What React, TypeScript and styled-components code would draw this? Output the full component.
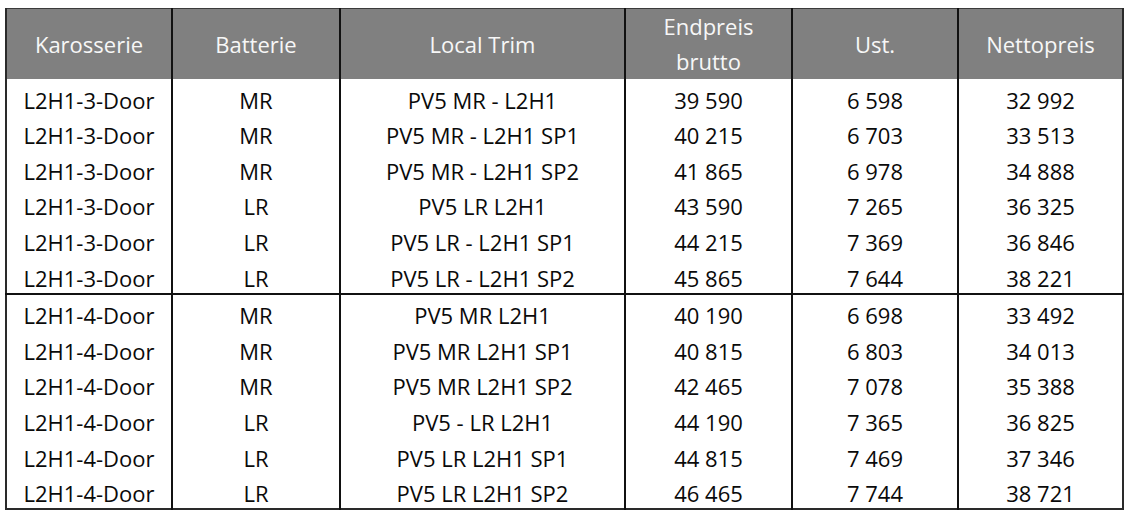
import React from "react";
import styled, { createGlobalStyle } from "styled-components";

const GlobalStyle = createGlobalStyle`
  html, body {
    margin: 0;
    padding: 0;
    background: #fff;
  }
  body {
    font-family: 'Open Sans', 'Liberation Sans', sans-serif;
  }
`;

type Row = [string, string, string, string, string, string];

const groups: Row[][] = [
  [
    ["L2H1-3-Door", "MR", "PV5 MR - L2H1", "39 590", "6 598", "32 992"],
    ["L2H1-3-Door", "MR", "PV5 MR - L2H1 SP1", "40 215", "6 703", "33 513"],
    ["L2H1-3-Door", "MR", "PV5 MR - L2H1 SP2", "41 865", "6 978", "34 888"],
    ["L2H1-3-Door", "LR", "PV5 LR L2H1", "43 590", "7 265", "36 325"],
    ["L2H1-3-Door", "LR", "PV5 LR - L2H1 SP1", "44 215", "7 369", "36 846"],
    ["L2H1-3-Door", "LR", "PV5 LR - L2H1 SP2", "45 865", "7 644", "38 221"],
  ],
  [
    ["L2H1-4-Door", "MR", "PV5 MR L2H1", "40 190", "6 698", "33 492"],
    ["L2H1-4-Door", "MR", "PV5 MR L2H1 SP1", "40 815", "6 803", "34 013"],
    ["L2H1-4-Door", "MR", "PV5 MR L2H1 SP2", "42 465", "7 078", "35 388"],
    ["L2H1-4-Door", "LR", "PV5 - LR L2H1", "44 190", "7 365", "36 825"],
    ["L2H1-4-Door", "LR", "PV5 LR L2H1 SP1", "44 815", "7 469", "37 346"],
    ["L2H1-4-Door", "LR", "PV5 LR L2H1 SP2", "46 465", "7 744", "38 721"],
  ],
];

const columns = [
  { title: "Karosserie", width: 166 },
  { title: "Batterie", width: 168 },
  { title: "Local Trim", width: 285 },
  { title: "Endpreis brutto", width: 167, twoLine: true },
  { title: "Ust.", width: 166 },
  { title: "Nettopreis", width: 165 },
];

export default function App() {
  return (
    <Page>
      <GlobalStyle />
      <PriceTable>
        <colgroup>
          {columns.map((c) => (
            <col key={c.title} style={{ width: c.width }} />
          ))}
        </colgroup>
        <thead>
          <tr>
            {columns.map((c) => (
              <HeadCell key={c.title}>
                {c.twoLine ? (
                  <>
                    Endpreis
                    <br />
                    brutto
                  </>
                ) : (
                  c.title
                )}
              </HeadCell>
            ))}
          </tr>
        </thead>
        {groups.map((rows, gi) => (
          <Group key={gi}>
            {rows.map((r, ri) => (
              <tr key={ri}>
                {r.map((v, ci) => (
                  <Cell key={ci}>{v}</Cell>
                ))}
              </tr>
            ))}
          </Group>
        ))}
      </PriceTable>
    </Page>
  );
}

const Page = styled.div`
  padding: 8px 0 0 5px;
`;

const PriceTable = styled.table`
  border-collapse: collapse;
  table-layout: fixed;
  width: 1118px;
  border: 2px solid #2a2a2a;
  border-top: 1px solid #3a3a3a;
  color: #0a0a0a;
  font-size: 22px;
`;

const HeadCell = styled.th`
  height: 70px;
  padding: 0;
  background: #808080;
  color: #f7f7f7;
  font-weight: 400;
  line-height: 35px;
  text-align: center;
  vertical-align: middle;
  border-left: 2px solid #111;
  &:first-child {
    border-left: none;
  }
`;

const Group = styled.tbody`
  & + & {
    border-top: 2px solid #111;
  }
`;

const Cell = styled.td`
  height: 35.6px;
  padding: 0;
  line-height: 30px;
  text-align: center;
  vertical-align: bottom;
  white-space: nowrap;
  border-left: 2px solid #111;
  &:first-child {
    border-left: none;
  }
`;
